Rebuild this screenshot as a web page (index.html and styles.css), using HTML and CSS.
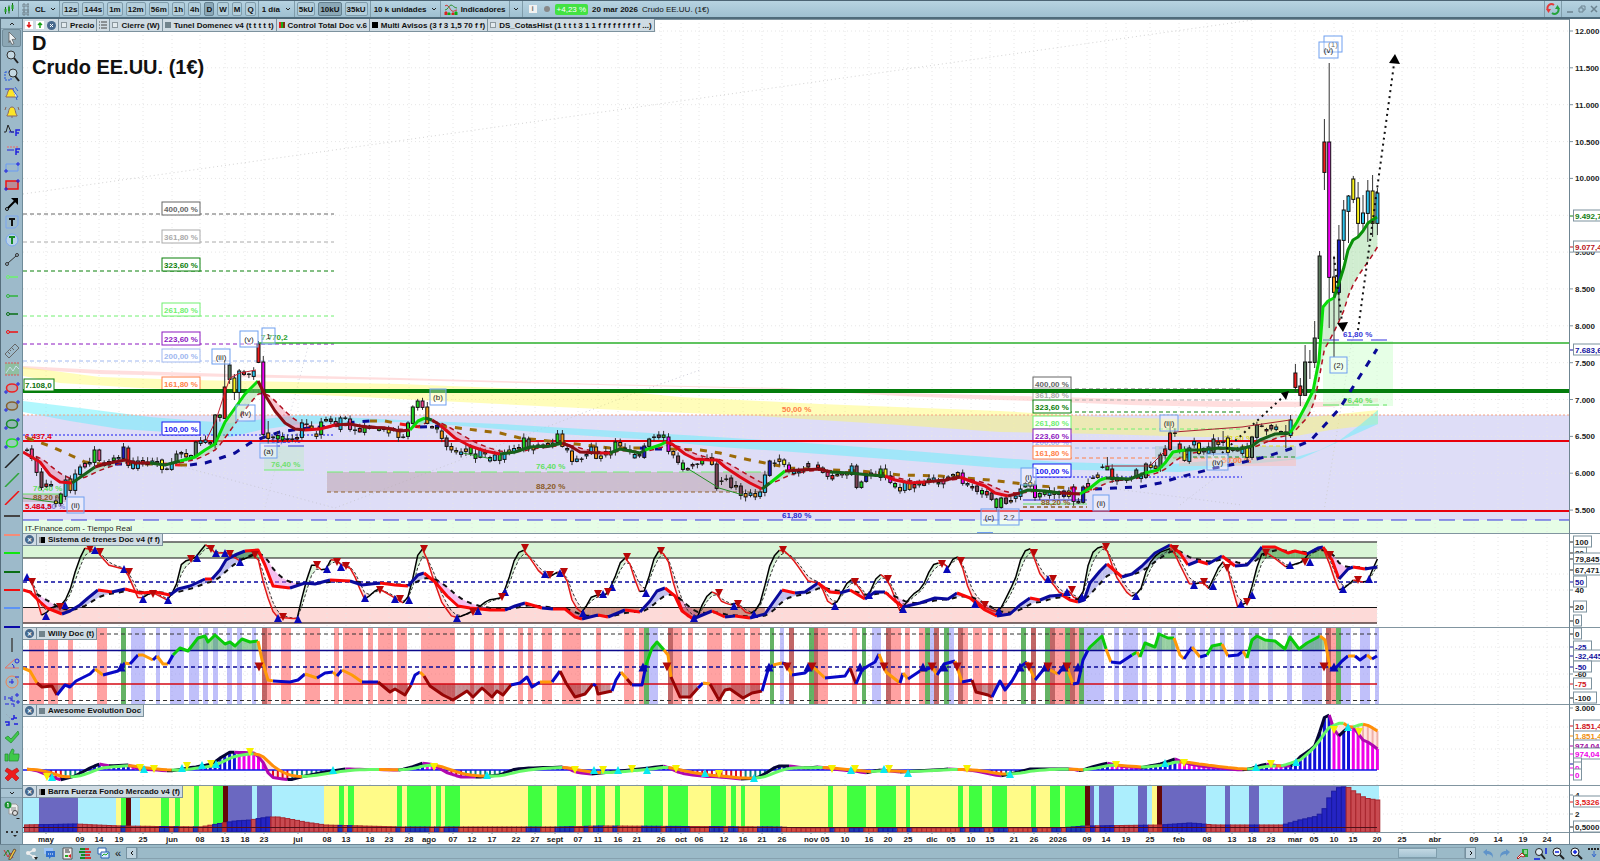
FILE: index.html
```html
<!DOCTYPE html>
<html lang="es">
<head>
    <meta charset="UTF-8">
    <meta name="viewport" content="width=device-width, initial-scale=1.0">
    <title>Crudo EE.UU. (1€)</title>
    <link rel="stylesheet" href="styles.css">
</head>
<body>
    <!-- Top toolbar -->
    <header class="toolbar">
        <div class="group logo">
            <svg width="12" height="12" viewBox="0 0 12 12"><path d="M2.5 4v7M6 2.500v8M9.500 0v8" stroke="#176b17"/><path d="M1.500 6h2v3h-2zM5 4h2v4H5zM8.500 2h2v4h-2z" fill="#22a022"/></svg>
        </div>
        <div class="group symbol">
            <svg width="7" height="13" viewBox="0 0 7 13"><path d="M1 1h2v3H1zM5 1h2v3H5zM1 6h2v2H1zM5 6h2v2H5zM1 9h2v3H1zM5 9h2v3H5z" fill="none" stroke="#70828c"/></svg>
            <label class="drop"><select aria-label="Símbolo"><option>CL</option></select><svg class="chev" viewBox="0 0 6 4"><path d="M1 1l2 2 2-2"/></svg></label>
        </div>
        <div class="group frames">
            <button>12s</button><button>144s</button><button>1m</button><button>12m</button><button>56m</button><button>1h</button><button>4h</button><button class="on">D</button><button>W</button><button>M</button><button>Q</button>
        </div>
        <div class="group">
            <label class="drop"><select aria-label="Periodo"><option>1 día</option></select><svg class="chev" viewBox="0 0 6 4"><path d="M1 1l2 2 2-2"/></svg></label>
        </div>
        <div class="group frames">
            <button>5kU</button><button class="on">10kU</button><button>35kU</button>
        </div>
        <div class="group">
            <label class="drop"><select aria-label="Unidades"><option>10 k unidades</option></select><svg class="chev" viewBox="0 0 6 4"><path d="M1 1l2 2 2-2"/></svg></label>
        </div>
        <div class="group">
            <button class="plain"><svg width="14" height="13" viewBox="0 0 14 13"><path d="M1 3c3-3 5 4 7 5s3-1 5-1" fill="none" stroke="#d03030"/><path d="M1 7c3 0 4-5 6-5s3 3 6 3" fill="none" stroke="#309030"/><path d="M1 12V9h2v3M8 12v-2h2v2" fill="#d22" stroke="#d22"/><path d="M4 12v-2h2v2M11 12V9h2v3" fill="#1a1" stroke="#1a1"/></svg>Indicadores</button>
        </div>
        <div class="group">
            <button class="plain" aria-label="Más indicadores"><svg class="chev" viewBox="0 0 6 4"><path d="M1 1l2 2 2-2"/></svg></button>
        </div>
        <div class="quote">
            <span class="info">i</span><span class="dot"></span><span class="change">+4,23 %</span><b>20 mar 2026</b><span>Crudo EE.UU. (1€)</span>
        </div>
        <div class="window-controls">
            <button class="plain sync" aria-label="Sincronizar"><svg width="14" height="14" viewBox="0 0 14 14"><path d="M2 8a4 4 0 0 1 6-5" fill="none" stroke="#e33b3b" stroke-width="2"/><path d="M0 7h5L2.500 11z" fill="#e33b3b"/><path d="M12 6a4 4 0 0 1-6 5" fill="none" stroke="#23a33a" stroke-width="2"/><path d="M9 7h5l-2.500-4z" fill="#23a33a"/></svg></button>
            <button class="plain" aria-label="Minimizar"><svg width="8" height="8" viewBox="0 0 8 8"><path d="M1 7h6" stroke="#6c8390" stroke-width="1.500"/></svg></button>
            <button class="plain" aria-label="Restaurar"><svg width="8" height="8" viewBox="0 0 8 8"><path d="M1 3h4v4H1zM3 3V1h4v4H5" fill="none" stroke="#6c8390"/></svg></button>
            <button class="plain" aria-label="Cerrar"><svg width="8" height="8" viewBox="0 0 8 8"><path d="M1 1l6 6M7 1L1 7" stroke="#6c8390" stroke-width="1.500"/></svg></button>
        </div>
    </header>

    <div class="workspace">
        <!-- Drawing tools -->
        <nav class="sidebar">
            <button class="scroll" aria-label="Subir"><svg class="chev" viewBox="0 0 6 4"><path d="M1 3l2-2 2 2"/></svg></button>
            <div class="tools" id="tools"></div>
            <button class="scroll more" aria-label="Bajar"><svg class="chev" viewBox="0 0 6 4"><path d="M1 1l2 2 2-2"/></svg></button>
            <button class="tool tall" aria-label="Listas"><svg width="16" height="18" viewBox="0 0 16 18"><path d="M5 3h7l2 2v8H5z" fill="#eee" stroke="#999"/><path d="M7 7h5M7 9h5" stroke="#888"/><circle cx="4" cy="4" r="3.500" fill="#18912c"/><path d="M3 3l1-1v4" stroke="#fff" fill="none"/><circle cx="11" cy="12" r="2.500" fill="#ddd" stroke="#444"/><path d="M12 17h4l-2 2z" fill="#222"/></svg></button>
            <button class="tool tall" aria-label="Más"><svg width="14" height="12" viewBox="0 0 14 12"><path d="M1 4h2v2H1zM6 4h2v2H6zM11 4h2v2h-2z" fill="#333"/><path d="M8 8h4l-2 2z" fill="#222"/></svg></button>
        </nav>

        <main class="charts">
            <section class="panel price" data-panel="price">
                <div class="tags">
                    <div class="tag">
                        <svg width="8" height="8" viewBox="0 0 8 8"><path d="M0 0h8v8H0z" fill="#fff"/><path d="M4 1v5M2 4l2 2 2-2" stroke="#e01818" stroke-width="1.500" fill="none"/></svg>
                        <svg width="8" height="8" viewBox="0 0 8 8"><path d="M0 0h8v8H0z" fill="#fff"/><path d="M4 7V2M2 4l2-2 2 2" stroke="#18a018" stroke-width="1.500" fill="none"/></svg>
                        <svg width="9" height="9" viewBox="0 0 9 9"><circle cx="4.500" cy="4.500" r="4.500" fill="#47698c"/><path d="M3 3l3 3M6 3L3 6" stroke="#fff"/></svg>
                    </div>
                    <div class="tag"><span class="swatch empty"></span>Precio</div>
                    <div class="tag"><svg width="8" height="8" viewBox="0 0 8 8"><path d="M0 1h1M0 4h1M0 7h1M2 1h6M2 4h6M2 7h6" stroke="#444"/></svg></div>
                    <div class="tag"><span class="swatch empty"></span>Cierre (W)</div>
                    <div class="tag"><span class="swatch grey"></span>Tunel Domenec v4 (t t t t t)</div>
                    <div class="tag"><span class="swatch multi"></span>Control Total Doc v.6</div>
                    <div class="tag"><span class="swatch black"></span>Multi Avisos (3 f 3 1,5 70 f f)</div>
                    <div class="tag"><span class="swatch empty"></span>DS_CotasHist (1 t t t 3 1 1 f f f f f f f f f ...)</div>
                </div>
                <h1>D<br>Crudo EE.UU. (1€)</h1>
                <svg class="plot"></svg><svg class="axis"></svg>
            </section>
            <section class="panel trains" data-panel="trains">
                <div class="tags title"><button class="tag close" aria-label="Quitar">✕</button><div class="tag"><span class="swatch half"></span>Sistema de trenes Doc v4 (f f)</div></div>
                <svg class="plot"></svg><svg class="axis"></svg>
            </section>
            <section class="panel willy" data-panel="willy">
                <div class="tags title"><button class="tag close" aria-label="Quitar">✕</button><div class="tag"><span class="swatch grey"></span>Willy Doc (t)</div></div>
                <svg class="plot"></svg><svg class="axis"></svg>
            </section>
            <section class="panel awesome" data-panel="awesome">
                <div class="tags title"><button class="tag close" aria-label="Quitar">✕</button><div class="tag"><span class="swatch grey"></span>Awesome Evolution Doc</div></div>
                <svg class="plot"></svg><svg class="axis"></svg>
            </section>
            <section class="panel force" data-panel="force">
                <div class="tags title"><button class="tag close" aria-label="Quitar">✕</button><div class="tag"><span class="swatch half"></span>Barra Fuerza Fondo Mercado v4 (f)</div></div>
                <svg class="plot"></svg><svg class="axis"></svg>
            </section>
            <section class="panel time" data-panel="time">
                <svg class="plot"></svg><svg class="axis"></svg>
            </section>
        </main>
    </div>

    <!-- Bottom bar -->
    <footer class="bottombar">
        <button class="plain pencil" aria-label="Dibujar"><svg width="14" height="13" viewBox="0 0 14 13"><path d="M1 3l4 7 2-4 3 5" fill="none" stroke="#c33"/><path d="M1 9l4-6 3 7" fill="none" stroke="#282"/><path d="M6 11l5-9 2 1-5 9-2 1z" fill="#f3c33a" stroke="#654"/></svg></button>
        <button class="plain" aria-label="Compartir"><svg width="13" height="13" viewBox="0 0 13 13"><path d="M9 3L3 6l6 4" stroke="#eee" fill="none" stroke-width="1.500"/><circle cx="9" cy="3" r="2" fill="#eee"/><circle cx="3" cy="6" r="2" fill="#eee"/><circle cx="9" cy="10" r="2" fill="#eee"/><path d="M9 10h4l-2 3z" fill="#222"/></svg></button>
        <button class="plain" aria-label="Comentarios"><svg width="13" height="13" viewBox="0 0 13 13"><path d="M1 1h9v6H1z" fill="#9cc3f4"/><path d="M3 4h9v6H8l-2 2v-2H3z" fill="#2f6fd0"/><path d="M5 7h1M7 7h1M9 7h1" stroke="#fff"/></svg></button>
        <button class="plain" aria-label="Informe"><svg width="13" height="13" viewBox="0 0 13 13"><path d="M2 1h9v11H2z" fill="#eee" stroke="#555"/><path d="M4 3h4M4 5h5" stroke="#333"/><path d="M4 8h3v2H4z" fill="#2a2"/><path d="M7 9l3-2v4z" fill="#d22"/></svg></button>
        <button class="plain" aria-label="Órdenes"><svg width="13" height="13" viewBox="0 0 13 13"><path d="M1 2h5M0 5h6M2 8h4M1 11h5" stroke="#168a26" stroke-width="2"/><path d="M6 2h4M6 5h6M6 8h5M6 11h6" stroke="#d63030" stroke-width="2"/></svg></button>
        <button class="plain" aria-label="Ventanas"><svg width="13" height="13" viewBox="0 0 13 13"><path d="M1 1h8v6H1z" fill="#fff" stroke="#2660b0"/><path d="M4 5h8v6H4z" fill="#d8eaff" stroke="#2660b0"/><path d="M5 9l2-2 2 1 2-2" stroke="#2a2" fill="none"/></svg></button>
        <span class="collapse">«</span>
        <button class="arrow" aria-label="Atrás"><svg width="4" height="6" viewBox="0 0 4 6"><path d="M3 1L1 3l2 2" fill="none" stroke="#111"/></svg></button>
        <div class="track"><div class="thumb"></div></div>
        <button class="arrow" aria-label="Adelante"><svg width="4" height="6" viewBox="0 0 4 6"><path d="M1 1l2 2-2 2" fill="none" stroke="#111"/></svg></button>
        <div class="zooms">
            <button class="plain" aria-label="Deshacer"><svg width="12" height="11" viewBox="0 0 12 11"><path d="M1 4l4-3v2c4 0 6 2 6 7-1-3-3-4-6-4v2z" fill="#5f93c9"/></svg></button>
            <button class="plain" aria-label="Rehacer"><svg width="12" height="11" viewBox="0 0 12 11"><path d="M11 4L7 1v2c-4 0-6 2-6 7 1-3 3-4 6-4v2z" fill="#5f93c9"/></svg></button>
            <button class="plain" aria-label="Configurar"><svg width="13" height="13" viewBox="0 0 13 13"><path d="M6 2h6v8H6z" fill="#24a534"/><path d="M8 4h3M8 6h3" stroke="#fff"/><path d="M1 11l5-5 3 3-2 1-2-1-3 3z" fill="#eee" stroke="#b22"/></svg></button>
            <button class="plain" aria-label="Ajustar"><svg width="13" height="13" viewBox="0 0 13 13"><circle cx="5" cy="5" r="3.500" fill="#ddeaf2" stroke="#222"/><path d="M7 7l4 5" stroke="#222" stroke-width="2"/><path d="M12 1v6M0 12h6" stroke="#12d" stroke-width="1.500"/></svg></button>
            <button class="plain" aria-label="Alejar"><svg width="13" height="13" viewBox="0 0 13 13"><circle cx="5" cy="5" r="4" fill="#eef5fb" stroke="#222"/><path d="M8 8l4 4" stroke="#222" stroke-width="2"/><path d="M3 5h4" stroke="#12d" stroke-width="1.500"/></svg></button>
            <button class="plain" aria-label="Acercar"><svg width="13" height="13" viewBox="0 0 13 13"><circle cx="5" cy="5" r="4" fill="#eef5fb" stroke="#222"/><path d="M8 8l4 4" stroke="#222" stroke-width="2"/><path d="M3 5h4M5 3v4" stroke="#12d" stroke-width="1.500"/></svg></button>
            <button class="plain" aria-label="Bajar barra"><svg width="12" height="12" viewBox="0 0 12 12"><path d="M0 2h12" stroke="#222" stroke-width="2" stroke-dasharray="2 1"/><path d="M6 4v5M4 7l2 3 2-3" stroke="#36c" fill="none"/></svg></button>
        </div>
    </footer>

    <script src="charts.js"></script>
</body>
</html>
```
FILE: styles.css
```css
* {
    box-sizing: border-box;
}
body {
    margin: 0;
    height: 100vh;
    display: flex;
    flex-direction: column;
    overflow: hidden;
    background: #fff;
    color: #111;
    font-family: "Liberation Sans", Arial, sans-serif;
    font-size: 8px;
}
button, select {
    font: inherit;
    font-weight: bold;
    color: inherit;
    margin: 0;
}
svg {
    display: block;
    flex: none;
}

/* Toolbar */
.toolbar {
    flex: none;
    display: flex;
    align-items: stretch;
    height: 19px;
    border-top: 1px solid #4c6474;
    border-bottom: 2px solid #4f6b7b;
    background: linear-gradient(#b7d3e1, #9fc0d1);
    font-weight: bold;
}
.group {
    display: flex;
    align-items: center;
    gap: 3px;
    padding: 0 3px;
    border-right: 1px solid #7f9caa;
}
.logo {
    width: 19px;
}
.symbol {
    gap: 6px;
}
.frames {
    padding: 0 2px;
}
.frames button {
    height: 14px;
    padding: 0 1px;
    border: 1px solid #7f9cab;
    border-radius: 2px;
    background: #b3cedb;
}
.frames button.on {
    background: #8ba8b7;
    border-color: #64808f;
}
.drop {
    display: flex;
    align-items: center;
    gap: 4px;
}
.drop select {
    appearance: none;
    border: 0;
    padding: 0;
    background: none;
}
.chev {
    width: 6px;
    height: 4px;
    fill: none;
    stroke: #222;
}
.plain {
    display: flex;
    align-items: center;
    justify-content: center;
    gap: 3px;
    border: 0;
    padding: 0;
    background: none;
}
.quote {
    display: flex;
    align-items: center;
    gap: 4px;
    padding-left: 6px;
    font-weight: normal;
}
.info {
    width: 8px;
    height: 8px;
    background: #f2f2f2;
    color: #777;
    font-weight: bold;
    line-height: 8px;
    text-align: center;
}
.dot {
    width: 6px;
    height: 6px;
    margin: 0 1px 0 3px;
    border-radius: 3px;
    background: #888;
}
.change {
    padding: 1px 2px;
    border-radius: 2px;
    background: #43e243;
    color: #fff;
}
.window-controls {
    display: flex;
    gap: 4px;
    margin-left: auto;
    padding-right: 2px;
}
.sync {
    padding: 0 1px;
    border: solid #7f9caa;
    border-width: 0 1px;
}

/* Sidebar */
.workspace {
    flex: 1;
    min-height: 0;
    display: flex;
}
.sidebar {
    flex: none;
    width: 23px;
    display: flex;
    flex-direction: column;
    border-left: 1px solid #566e7c;
    border-right: 1px solid #6f8b99;
    background: #9dbaca;
}
.scroll {
    display: flex;
    align-items: center;
    justify-content: center;
    height: 10px;
    border: 0;
    border-bottom: 1px solid #84a0ae;
    padding: 0;
    background: #a9c5d3;
}
.more {
    margin-top: 5px;
    border-top: 1px solid #6f8b99;
}
.tools {
    flex: 1;
    min-height: 0;
    display: grid;
    grid-auto-rows: 1fr;
}
.tool {
    display: flex;
    align-items: center;
    justify-content: center;
    min-height: 0;
    margin: 0 1px;
    border: 1px solid transparent;
    border-radius: 2px;
    padding: 0;
    background: none;
}
.tool.selected {
    background: #8ba6b4;
    border-color: #718c9a;
}
.tool.tall {
    height: 23px;
}

/* Chart panels */
.charts {
    flex: 1;
    min-width: 0;
    display: flex;
    flex-direction: column;
}
.panel {
    position: relative;
    display: flex;
    min-height: 0;
}
.price {
    flex: 514 1 0;
}
.trains {
    flex: 94 1 0;
}
.willy {
    flex: 77 1 0;
}
.awesome {
    flex: 81 1 0;
}
.force {
    flex: 47 1 0;
}
.time {
    flex: 12 1 0;
}
.plot {
    flex: 1;
    min-width: 0;
    height: 100%;
}
.axis {
    width: 31px;
    height: 100%;
    border-left: 1px solid #6f8592;
}
.panel text {
    font-size: 8px;
    font-weight: bold;
}
.panel text.wave {
    font-weight: normal;
}
.panel h1 {
    position: absolute;
    top: 12px;
    left: 9px;
    margin: 0;
    font-size: 20px;
    line-height: 24px;
}
.tags {
    position: absolute;
    top: 0;
    left: 0;
    display: flex;
    height: 13px;
    border: 1px solid #7d929e;
    border-top: 0;
    border-left: 0;
    background: #cfdbe3;
    font-weight: bold;
}
.tags.title {
    top: 1px;
    height: 12px;
}
.tag {
    display: flex;
    align-items: center;
    gap: 3px;
    padding: 0 2px;
    white-space: nowrap;
}
.tag + .tag {
    border-left: 1px solid #7d929e;
}
.tag.close {
    width: 13px;
    height: 11px;
    border: 0;
    padding: 0;
    justify-content: center;
    background: radial-gradient(circle, #47698c 4px, transparent 5px);
    color: #fff;
    font-size: 6px;
}
.swatch {
    width: 6px;
    height: 6px;
}
.empty {
    background: #e3eaee;
    border: 1px solid #8d999f;
}
.grey {
    background: #71838c;
}
.black {
    background: #000;
}
.multi {
    background: linear-gradient(90deg, #e02020 33%, #18b018 33% 66%, #803010 66%);
}
.half {
    background: linear-gradient(90deg, #888 40%, #000 40%);
}

/* Bottom bar */
.bottombar {
    flex: none;
    display: flex;
    align-items: center;
    gap: 5px;
    height: 17px;
    border-top: 1px solid #6d8796;
    background: #9bbac8;
}
.pencil {
    width: 20px;
    align-self: stretch;
    background: #8da9b7;
}
.bottombar .plain {
    flex: none;
}
.collapse {
    font-size: 11px;
}
.arrow {
    display: flex;
    align-items: center;
    justify-content: center;
    width: 11px;
    height: 12px;
    border: 1px solid #7591a0;
    padding: 0;
    background: #bcd2de;
}
.track {
    flex: 1;
    display: flex;
    align-self: stretch;
    margin: 2px -5px;
    border: 1px solid #86a1af;
}
.thumb {
    width: 3%;
    margin-left: 95%;
    border: 1px solid #7f9ead;
    background: linear-gradient(#c2d8e3, #a5c3d2);
}
.zooms {
    display: flex;
    gap: 5px;
    padding-left: 1px;
}
```
FILE: charts.js
```js
// Coordinates below are on a 1546 x 825 sheet that starts at (23, 19); every panel scales its own slice.
const X0 = 23, XW = 1546, FIRST = 27, STEP = 4.823, BARS = 281;

const PANELS = {
    price: [19, 514],
    trains: [533, 94],
    willy: [627, 77],
    awesome: [704, 81],
    force: [785, 47],
    time: [832, 12]
};

const CANDLE = { g: '#1fd61f', c: '#2cc4ee', o: '#f39a18', m: '#f400f4', p: '#ef3f8b', r: '#f01c1c', s: '#5b7a5e', b: '#1c1cc0', y: '#fbf21a', w: '#7c4455' };

const TIMES = 'may,46 09,80 14,99 19,119 25,143 jun,172 08,200 13,225 18,245 23,264 jul,298 08,327 13,346 18,370 23,389 28,409 ago,429 07,453 12,472 17,492 22,516 27,535 sept,555 07,578 11,598 16,618 21,637 26,661 oct,681 06,699 12,724 16,743 21,762 26,782 nov,811 05,825 10,845 16,869 20,888 25,908 dic,932 05,951 10,971 15,990 21,1014 26,1034 2026,1058 09,1087 14,1106 19,1126 25,1150 feb,1179 08,1207 13,1232 18,1252 23,1271 mar,1295 05,1314 10,1334 15,1353 20,1377 25,1402 abr,1435 09,1474 14,1498 19,1523 24,1547'
    .split(' ').map(t => { const p = t.split(','); return [p[0], +p[1]]; });

// start x, then one entry per session: middle, or top-bottom + colour, optionally /high-low
const SESSIONS = [
    [27, '450 449-458p 459-472p 472-487w 485 485 502 494-503g 480-496c 479-490o 474-490c 467-474c 465 463 450-462g 450-460p 464 463 459 458 447-458b/443-460 448-465r 461-468c 461-468c 462 463 462 462 460-469y 469 463-469c 454-462s 453 455 457'],
    [196, '442-456s 442 441 443 415-444s 416 387-418r/360-418 365-379s 378-392y/374-400 371-392c/369-405 373 374 371-376c 344-362r 362-434m/356-439 433-438o/421-444 437 437 438 439 439 438 423-437c 424 427 435 422-434g 420 420 423 418-429c 418 419-429p 430 430 427-432g 427 428 429 429 431 429'],
    [400, '430-437o 437 423-436g 407-423g 401-407g 401-407p 407-423o 427 428 431-438o 438-446w 448 451 453 450 447-453g 454-458g 450-457c 453 459 455-460c 454-460g 453-459c 451 450 448 438-448g 439-448s 448 445 446 445 444 434-442g/430-444 434-446o 449 451-461o 460 459 455 447-453c 447-458o 457 453 453 442-451g 444 448 450 456 455 446-457b 439-446s 437 436 436 437-451m 453 456-462w 463-469g 469'],
    [694, '465 464 462 459 458-464o 464-488w 481 479 478-487w 486 486-495w 495 494 495 492-496c 475-492c 461-475b 463 460 460-464y 465-471m 472 472 470 465'],
    [816, '466 468-472p 472-476p 477 475 474 474 466-474c/463-476 466-487w 482-487g 476-481b 474 475 469-477g 469-477y 476-482m 485 489 482-490c 482-489o 486 484 484 480 479 483 482 478 475 474 473-483m 484 487 486-491w 492 493 493-499w'],
    [995, '499-507g 498-507g 498-503w 501 497 489-496c 485 484 485-497m 495 493 491-495c 493 493 491-496b 491-496y 487-501m 502 487-502b 485 478 476 467 468/457-470 469-479r 479 479 480 478 470-477s 477 464-477s 466 467 455-467s 449-455r 433-449r/426-451 433 444-450r 451-460y 448-461c 443 443-453y 450'],
    [1208, '447-453c 439-452s 443 442/431-446 438-452y 450 450 447-453c 447-457y 437-457s 425-437s 426 430 427 428 432 433/425-448 420-435c/415-438'],
    [1295, '373-387r/364-392 386-395r/378-406 362-395s/345-395 362-362s/350-379 338-362s/321-368 256-338s/251-343 142-172r/119-190 142-277m/63-328 277-292o/256-357 240-292b/225-320 210-240c/200-260 196-211c/195-243 179-199y/176-203 198-223y/182-237 213-223c/195-232 191-213c/180-242 191-223y/175-237 193-223c/188-235']
];

const FAST = '23,452r 40,462 50,475 60,482 72,483k 85,474 95,467d 105,464 125,460 135,463 150,463k 165,465 180,461g 195,457 205,450 215,444 225,422 235,408 245,394 258,381d 265,395 275,411 285,423 295,429 305,430r 320,429 335,425d 350,424 365,427 385,428 400,431 410,430g 418,421 425,418k 432,420d 440,425r 455,438 470,446 485,451 500,454k 515,452 530,447 550,446 562,443d 570,446 580,452 600,453r 610,453k 620,449 640,453 645,450g 660,445 666,442r 672,444 685,454 695,459 710,460 717,460 725,467 740,477 750,483 762,489k 770,483g 785,471d 800,470 820,469 830,472k 850,473 870,475 885,476r 895,480 910,483 925,482d 945,480 960,477r 970,481 985,486 995,493 1008,496d 1020,493k 1028,490 1045,491 1060,493d 1080,494g 1090,488 1100,480 1106,478k 1130,479 1145,473g 1158,470 1165,463 1173,452 1185,450k 1200,450 1220,448 1240,449 1252,446 1260,440 1275,434 1290,433g 1297,422 1305,407 1313,391 1319,360 1323,307 1328,301 1334,298h 1338,286 1344,267 1348,250 1353,240h 1358,237 1363,231 1368,223 1377,217';
const SLOW = '1290,436 1305,420 1313,408 1318,385 1324,350 1328,343 1335,330 1345,308 1350,290 1360,273 1372,256 1377,247';
const BASE = '27,438y 50,446 70,455 85,462 100,464r 115,464b 130,464y 160,464r 180,465y 190,465b 205,463 215,460 235,453 250,443 262,438 280,432 300,429 330,426 345,423 370,421y 385,421 400,424r 420,427b 440,426y 450,427 475,430 500,433 520,438 540,440 585,445 610,448 640,448b 650,449 670,449y 700,450 720,453 740,458 760,462 790,468 810,469 860,471 900,475 940,476 990,480 1040,486 1070,488r 1095,489b 1115,488 1140,487 1160,483 1180,477 1215,468 1240,463 1265,457 1290,449 1310,441 1323,427 1340,408 1353,387 1367,365 1377,349';
const CLOUDS = [
    ['rgba(255,190,190,.5)', '23,366 100,370 230,374 400,378 600,384 780,388 860,392 1020,396 1200,401 1330,402 1378,398', '23,369 100,374 230,377 400,380 600,385 780,389 900,396 1000,400 1060,402 1130,405 1220,407 1330,407 1378,402'],
    ['rgba(255,250,90,.42)', '23,367 100,377 190,380 400,384 500,388 640,393 680,397 820,404 1000,411 1100,417 1220,420 1290,419 1340,414 1378,410', '23,376 60,383 140,388 300,394 400,399 500,404 640,411 760,416 820,420 900,425 1000,432 1100,434 1200,437 1290,437 1330,430 1378,424'],
    ['rgba(100,240,252,.5)', '23,401 80,408 150,417 200,421 230,423 300,415 400,420 500,424 600,430 700,436 780,441 900,450 1000,458 1060,462 1160,465 1220,460 1290,459 1320,450 1340,440 1360,425 1378,410', '23,412 70,421 120,429 200,434 230,437 260,430 300,424 400,422 450,425 560,434 640,439 720,447 780,451 900,460 1000,468 1080,470 1180,472 1220,467 1300,459 1325,448 1340,441 1378,424']
];

const TRAIN = '23,590r 30,592 38,600 47,608 62,614n 70,611 80,605 88,598 98,590r 112,592n 125,589r 140,593 155,592 170,595n 178,589 190,586 205,579r 212,579n 220,570 226,560 235,555 245,551r 258,550 265,565 273,586 290,588n 305,583 315,584 330,580r 350,581n 362,585 380,583r 395,585 408,586n 418,575 424,573r 435,582 447,596 458,606 470,608 490,610 505,610n 515,606 525,603r 542,608n 553,609r 565,609 575,617 582,619n 590,617 598,615r 608,617n 625,610r 640,612n 650,601 657,591 665,588r 675,596 682,611 693,619n 700,616 712,611r 725,617n 735,616r 750,618n 765,614 772,604 782,590r 795,593n 805,592 818,583r 830,592 840,593n 850,590r 865,599n 875,592 885,592r 895,601 903,607n 920,603 935,598 948,599 957,593r 970,598 985,610 997,616n 1010,614 1020,605 1030,598r 1040,600n 1050,596 1062,595r 1070,600 1078,602n 1084,600 1090,583 1100,571 1107,564r 1115,571 1122,577n 1132,574 1142,566 1155,553 1170,545r 1180,553 1188,565n 1198,561r 1208,564n 1222,556r 1235,566n 1247,565 1255,556 1262,547r 1275,547 1288,553 1295,551 1307,554n 1318,548 1323,547r 1332,560 1339,579n 1348,569 1353,567r 1365,569n 1377,567';
const WAGON = '23,577 32,582 42,617 52,607 63,605 70,590 78,562 85,548 97,551 108,565 124,569 128,575 139,600 152,592 167,600 175,590 182,562 195,558 206,544 215,553 228,553 240,561 253,555 258,558 265,590 275,617 297,619 305,585 313,561 320,570 327,569 332,557 340,564 352,569 358,585 365,600 378,588 395,598 405,604 410,592 419,549 424,549 432,575 442,603 453,618 462,616 475,610 488,600 500,598 506,588 515,558 522,548 530,558 540,573 548,578 557,572 565,573 572,600 580,614 584,610 592,596 607,594 614,580 622,558 628,558 635,580 642,598 648,580 656,552 661,550 668,560 675,590 685,616 697,618 705,598 714,590 722,602 731,605 737,603 745,612 753,614 762,600 768,570 777,550 785,551 795,562 808,581 820,583 828,602 835,606 842,592 850,578 858,586 867,600 875,580 880,574 888,580 900,611 912,595 922,588 932,565 942,562 948,568 956,554 961,562 970,595 980,604 990,610 999,612 1010,590 1015,580 1022,555 1029,546 1037,565 1042,580 1050,580 1062,596 1070,590 1075,600 1082,598 1090,555 1101,545 1108,552 1115,575 1130,597 1140,592 1148,565 1158,553 1172,548 1180,565 1190,585 1203,582 1208,590 1222,560 1228,570 1237,607 1248,602 1255,575 1260,555 1266,552 1277,560 1286,567 1302,562 1312,550 1323,548 1330,565 1338,590 1345,588 1353,580 1367,583 1377,559';
const TRAIN_UP = '27,577 46,616 65,605 95,550 124,569 143,599 168,600 197,558 216,553 225,553 240,562 278,618 298,619 327,569 341,567 365,598 395,599 409,600 457,618 478,611 505,592 545,574 560,573 583,613 603,594 612,587 646,593 694,618 734,606 754,614 835,606 869,595 903,609 947,569 975,604 999,611 1048,579 1067,592 1082,597 1136,596 1194,585 1213,586 1241,604 1252,595 1290,565 1310,562 1343,589 1369,579';
const TRAIN_DOWN = '32,582 60,607 90,549 100,552 129,572 153,594 191,559 211,549 230,554 255,555 283,617 317,565 337,562 346,566 380,590 400,599 424,549 473,612 502,597 525,548 550,575 564,572 598,594 608,592 627,557 661,551 719,593 738,604 783,550 855,582 888,579 942,564 961,561 985,605 1034,553 1053,579 1072,590 1106,547 1175,549 1204,582 1227,568 1247,602 1266,553 1305,562 1330,555 1358,580';

const WILLY = '23,668o 30,671 37,683d 42,687 52,686 57,695n 65,685 70,687 76,681 90,674 95,669o 103,675n 118,671 125,663o 130,664n 138,655o 143,655 153,660n 157,656o 163,664 168,664n 173,655g 180,648 188,651 198,638 205,636 208,642 215,635 225,644 230,642 235,646 242,639 250,642 258,641o 262,660 268,680 273,681n 290,682 298,680 305,674o 317,678n 325,673 333,672o 337,676n 342,670o 352,675 362,682n 370,682 378,682d 390,692 395,689 405,695 411,685n 415,675 420,672o 424,676d 430,686 443,695 453,700 467,691 473,697 482,688 492,697 497,691 503,695 511,685n 520,683 527,677 532,687 540,682o 552,682n 560,671d 566,683 575,697 585,694 593,684n 596,686d 598,694 612,691n 616,680 621,672o 627,679d 632,685n 642,685 646,665g 652,648 657,642 664,650o 668,655 671,677d 680,697 690,697 698,688n 703,683o 710,684d 719,700 725,690 730,689 743,698 752,693 762,691n 768,670 773,665o 782,663n 786,664o 792,675n 805,673 812,666o 825,678n 845,676 850,668d 856,684n 862,670 868,666 875,662 879,654o 886,672 900,683n 903,673o 908,679n 920,671o 925,670n 932,667o 937,675n 944,664 955,661o 962,682n 972,680d 976,692 988,695 992,697n 1000,681 1005,690 1012,681 1020,667 1027,662o 1035,680n 1044,669 1050,670o 1058,674n 1065,665o 1068,670 1073,684n 1078,683 1083,660 1088,650g 1090,647 1102,636 1106,649o 1111,662n 1120,663 1132,655g 1137,652o 1140,657g 1145,643 1155,647 1159,634 1168,638 1174,638o 1180,655 1184,659n 1192,647o 1200,657n 1207,655g 1212,646 1222,644o 1228,656n 1238,655 1243,651o 1247,658g 1252,640 1257,636 1265,640 1275,641 1285,649 1290,637 1299,649 1307,643 1320,636o 1325,640 1330,668n 1335,669 1342,661 1348,656o 1355,656n 1360,660 1367,655o 1372,659n 1377,656';
const WILLY_BANDS = {
    'rgba(255,70,70,.5)': '29-44 48-58 68-73 97-107 267-271 281-291 305-320 334-339 343-363 368-373 378-393 397-407 421-455 470-474 484-494 499-504 518-523 528-533 542-552 562-581 596-601 624-634 639-644 673-682 688-693 707-722 731-745 750-760 818-828 852-857 891-901 905-910 919-925 963-968 973-982 988-993 1002-1007 1055-1065 1075-1079 1331-1336',
    'rgba(40,150,40,.72)': '121-126 644-649 770-774 809-814 862-866 925-930 944-949 1021-1026 1045-1050 1065-1070 1079-1084 1336-1341',
    'rgba(130,130,245,.5)': '131-145 156-160 170-184 189-199 203-208 213-218 227-232 237-242 252-256 649-658 780-784 872-881 930-934 949-954 1084-1104 1114-1119 1123-1138 1142-1147 1157-1162 1171-1176 1186-1195 1200-1205 1210-1215 1220-1225 1234-1244 1249-1259 1268-1273 1287-1292 1302-1322 1341-1351 1360-1370 1375-1379',
    'rgba(160,20,20,.65)': '262-267 668-673 789-794 814-818 886-891 934-939 958-963 1031-1036 1050-1055 1070-1075 1326-1331'
};

const AWESOME = '23,769 35,770 50,776 60,780 75,776 88,769 99,764 110,766 128,765 140,769 170,771 195,767 212,764 220,758 230,752 255,753 263,762 270,777 290,780 305,776 320,773 345,769 400,770 412,767 423,763 435,765 445,772 460,777 480,777 500,775 515,769 530,768 565,767 575,772 590,774 640,769 665,766 680,773 700,776 720,777 740,779 757,778 768,772 777,766 790,766 805,768 820,767 840,770 855,771 865,773 880,770 900,772 950,769 970,770 985,773 1000,776 1010,774 1030,769 1072,769 1080,771 1092,767 1107,763 1120,766 1140,768 1160,764 1175,759 1185,763 1200,766 1240,770 1250,769 1265,764 1280,766 1292,766 1300,757 1310,750 1316,745 1323,720 1328,711 1333,728 1339,736 1348,727 1353,727 1363,740 1370,743 1377,749';
const AWESOME_SLOW = '1285,765 1300,760 1312,750 1320,740 1328,728 1335,725 1342,722 1350,728 1362,724 1370,726 1377,731';

const FORCE_BANDS = {
    '#fffb88': '116-1085 1152-1157',
    '#aceefd': '23-39 78-116 131-140 252-257 272-324 1094-1099 1114-1138 1147-1152 1206-1225 1230-1249 1259-1283 1346-1379',
    '#6b68c1': '39-78 228-252 257-272 1090-1094 1099-1114 1138-1147 1162-1206 1225-1230 1249-1259 1283-1346',
    '#40ff40': '121-126 161-169 175-180 194-199 213-223 339-344 348-354 397-402 407-431 436-441 445-460 528-542 557-576 582-591 596-605 615-620 644-663 668-688 711-726 731-736 741-745 760-780 828-833 847-866 876-896 906-910 958-963 969-982 992-1007 1031-1036 1050-1060 1065-1085',
    '#640808': '126-131 223-228 1085-1090 1157-1162'
};
const FORCE = '23,825 75,824 120,826 200,827 223,823 235,821 250,820 262,818 268,817 278,817 290,819 305,822 325,825 400,827 560,827 600,826 780,827 800,828 1060,828 1085,826 1160,825 1190,823 1215,825 1283,825 1300,820 1318,816 1325,808 1330,796 1335,790 1340,787 1348,787 1355,792 1365,798 1377,800';

function nums(s) {
    return s.split(' ').map(t => t.split(/[,-]/).map(Number));
}

function parse(s) {
    let c = '';
    return s.split(' ').map(t => {
        const m = t.match(/(\d+),(\d+)([a-z]?)/);
        c = m[3] || c;
        return { x: +m[1], y: +m[2], c: c };
    });
}

// one y value per session
function sample(s) {
    const p = parse(s), out = [];
    for (let i = 0; i < BARS; i++) {
        const x = FIRST + i * STEP;
        let k = 0;
        while (k < p.length - 2 && p[k + 1].x < x) k++;
        const t = Math.max(0, Math.min(1, (x - p[k].x) / (p[k + 1].x - p[k].x)));
        out.push(p[k].y + (p[k + 1].y - p[k].y) * t);
    }
    return out;
}

function smooth(a, k) {
    let v = a[0];
    return a.map(y => (v += (y - v) * k));
}

function withTail(a, tail) {
    const from = parse(tail)[0].x, t = sample(tail);
    return a.map((y, i) => FIRST + i * STEP >= from ? t[i] : y);
}

function Pen(name) {
    const section = document.querySelector('[data-panel=' + name + ']');
    const plot = section.querySelector('.plot'), axis = section.querySelector('.axis');
    const top = PANELS[name][0], h = PANELS[name][1];
    const kx = plot.clientWidth / XW, ky = plot.clientHeight / h;
    const X = x => ((x - X0) * kx).toFixed(1), Y = y => ((y - top) * ky).toFixed(1);
    let out = '', side = '';
    const me = {
        line(x1, y1, x2, y2, c, w, dash) {
            out += `<line x1="${X(x1)}" y1="${Y(y1)}" x2="${X(x2)}" y2="${Y(y2)}" stroke="${c}" stroke-width="${w || 1}" ${dash ? `stroke-dasharray="${dash}"` : ''}/>`;
        },
        rect(x1, y1, x2, y2, fill, stroke) {
            out += `<rect x="${X(x1)}" y="${Y(y1)}" width="${(x2 - x1) * kx}" height="${Math.max(0, (y2 - y1) * ky)}" fill="${fill}" ${stroke ? `stroke="${stroke}"` : ''}/>`;
        },
        text(x, y, s, c, anchor, cls) {
            out += `<text x="${X(x)}" y="${Y(y)}" fill="${c}" text-anchor="${anchor || 'start'}" class="${cls || ''}">${s}</text>`;
        },
        poly(points, c, w, dash) {
            out += `<polyline points="${points.map(p => X(p[0]) + ',' + Y(p[1])).join(' ')}" fill="none" stroke="${c}" stroke-width="${w}" stroke-linejoin="round" ${dash ? `stroke-dasharray="${dash}"` : ''}/>`;
        },
        area(points, c) {
            out += `<polygon points="${points.map(p => X(p[0]) + ',' + Y(p[1])).join(' ')}" fill="${c}"/>`;
        },
        // polyline whose colour changes along the way
        coloured(s, map, w, dash) {
            const p = parse(s);
            let run = [[p[0].x, p[0].y]];
            for (let i = 1; i < p.length; i++) {
                run.push([p[i].x, p[i].y]);
                if (i === p.length - 1 || p[i].c !== p[i - 1].c) {
                    me.poly(run, map[p[i - 1].c], w, dash);
                    run = [[p[i].x, p[i].y]];
                }
            }
        },
        series(a, c, w, dash) {
            me.poly(a.map((y, i) => [FIRST + i * STEP, y]), c, w, dash);
        },
        slope(a, up, down, w) {
            let run = [[FIRST, a[0]]], dir = a[1] <= a[0];
            for (let i = 1; i < BARS; i++) {
                const d = Math.abs(a[i] - a[i - 1]) < 0.02 ? dir : a[i] < a[i - 1];
                if (d !== dir) {
                    me.poly(run, dir ? up : down, w);
                    run = [run[run.length - 1]];
                    dir = d;
                }
                run.push([FIRST + i * STEP, a[i]]);
            }
            me.poly(run, dir ? up : down, w);
        },
        between(a, b, above, below) {
            for (let i = 1; i < BARS; i++) {
                const x = FIRST + i * STEP;
                const c = a[i] < b[i] ? above : below;
                if (c) me.area([[x - STEP, a[i - 1]], [x, a[i]], [x, b[i]], [x - STEP, b[i - 1]]], c);
            }
        },
        arrow(x, y, up, c, r) {
            const d = up ? -r : r;
            me.area([[x - r, y - d], [x + r, y - d], [x, y + d]], c);
        },
        bands(groups, y1, y2) {
            for (const c in groups) nums(groups[c]).forEach(b => me.rect(b[0], y1, b[1], y2, c));
        },
        grid(rows, to) {
            TIMES.forEach(t => me.line(t[1], top, t[1], top + h, '#e6e6e6', 1, '1 3'));
            rows.forEach(y => me.line(X0, y, to || X0 + XW, y, '#e6e6e6', 1, '1 3'));
        },
        tick(y, s, c, boxed) {
            if (boxed) side += `<rect x="3.500" y="${Y(y - 6)}" width="${s.length > 5 ? 40 : s.length * 5 + 3}" height="11" fill="#fff" stroke="#7d929e"/>`;
            side += `<line x1="0" x2="3" y1="${Y(y)}" y2="${Y(y)}" stroke="${boxed ? c : '#7d929e'}"/><text x="5" y="${Y(y + 3)}" fill="${c}">${s}</text>`;
        },
        done() {
            me.line(X0, top + 0.5, X0 + XW, top + 0.5, '#8195a0');
            if (name !== 'price') side += '<line x1="0" x2="31" y1="0.5" y2="0.5" stroke="#8195a0"/>';
            plot.innerHTML = out;
            axis.innerHTML = side;
        }
    };
    return me;
}

function drawCandles(p) {
    const small = 'gocpywrcog';
    let seed = 7;
    const rnd = () => (seed = (seed * 16807) % 2147483647) / 2147483647;
    SESSIONS.forEach(([start, list]) => {
        const first = Math.round((start - FIRST) / STEP);
        list.split(' ').forEach((t, i) => {
            const x = FIRST + (first + i) * STEP;
            const [body, wick] = t.split('/');
            const m = body.match(/(\d+)(?:-(\d+)([a-z]))?/);
            let a = +m[1], b = +(m[2] || 0), c = m[3];
            if (!b) {
                const r = Math.floor(rnd() * 4);
                b = a + r / 2;
                a -= r / 2;
                c = small[Math.floor(rnd() * small.length)];
            }
            const w = wick ? wick.split('-').map(Number) : [a - 1 - rnd() * 4, b + 1 + rnd() * 4];
            p.line(x, w[0], x, w[1], '#333', 1);
            p.rect(x - 1.5, a, x + 1.5, b + 0.4, CANDLE[c], '#111');
        });
    });
}

function wave(p, x1, y1, x2, y2, s) {
    p.rect(x1, y1, x2, y2, 'rgba(255,255,255,.35)', '#6f9ff0');
    p.text((x1 + x2) / 2, (y1 + y2) / 2 + 3, s, '#222', 'middle', 'wave');
}

function fib(p, x, to, y, s, c, boxTop, dash) {
    p.line(boxTop && x > 500 ? x : X0, y, to, y, c, 1, dash || '4 3');
    if (!boxTop) return;
    p.rect(x, boxTop, x + 38, boxTop + 13, '#fff', c);
    p.text(x + 19, boxTop + 10, s, c, 'middle');
}

function drawPrice() {
    const p = Pen('price');
    const rows = [];
    for (let i = 0; i < 14; i++) rows.push(31 + i * 36.85);
    p.rect(X0, 415, X0 + XW, 520, '#deddf7');
    p.rect(X0, 520, X0 + XW, 533, '#e6fde6');
    p.grid(rows);
    p.line(23, 194, 1260, 19, '#d4d4d4', 1, '1 3');
    p.poly([[150, 458], [335, 508], [630, 395], [700, 370]], '#c9c9d6', 1, '1 3');
    p.poly([[1108, 488], [1242, 505]], '#c9c9d6', 1, '1 3');
    p.poly([[1180, 505], [1290, 420]], '#c9c9d6', 1, '1 3');
    p.line(1324, 511, 1352, 340, '#d0d0d0', 1, '1 3');
    p.line(264, 511, 308, 347, '#d4d4e0', 1, '1 3');

    CLOUDS.forEach(([c, a, b]) => p.area(nums(a).concat(nums(b).reverse()), c));
    p.rect(1323, 341, 1393, 406, 'rgba(210,255,210,.55)');
    p.rect(264, 446, 304, 470, 'rgba(190,235,200,.45)');
    p.rect(327, 472, 768, 492, 'rgba(185,160,170,.5)');
    p.rect(23, 494, 66, 502, 'rgba(185,160,170,.5)');
    p.rect(1155, 446, 1296, 458, 'rgba(160,200,190,.45)');
    p.rect(1179, 458, 1296, 466, 'rgba(250,190,180,.5)');

    // fibonacci levels
    [[214, '400,00 %', '#666', 202], [242, '361,80 %', '#aaa', 230], [271, '323,60 %', '#0a800a', 258], [316, '261,80 %', '#70f070', 303], [344, '223,60 %', '#8c18c0', 332], [361, '200,00 %', '#a0b8f0', 349]]
        .forEach(f => fib(p, 162, 334, f[0], f[1], f[2], f[3]));
    fib(p, 162, 200, 390, '161,80 %', '#ff8048', 377);
    fib(p, 162, 334, 435, '100,00 %', '#1818f0', 422, '2 2');
    [[389, '400,00 %', '#666', 377], [400, '361,80 %', '#aaa', 388], [448, '200,00 %', '#a0b8f0', 435], [412, '323,60 %', '#0a800a', 400], [429, '261,80 %', '#70f070', 416], [441, '223,60 %', '#8c18c0', 429], [458, '161,80 %', '#ff8048', 446]]
        .forEach(f => fib(p, 1033, 1242, f[0], f[1], f[2], f[3]));
    fib(p, 1033, 1242, 477, '100,00 %', '#1818f0', 464, '2 2');
    p.line(X0, 415, X0 + XW, 415, '#f5a080', 1, '2 2');
    p.text(782, 412, '50,00 %', '#ff8048');
    p.line(X0, 520, X0 + XW, 520, '#3434dd', 1, '16 8');
    p.text(782, 518, '61,80 %', '#2a2ad0');
    p.line(327, 472, 768, 472, '#70f070', 1, '16 6');
    p.text(536, 469, '76,40 %', '#60e060');
    p.line(327, 492, 768, 492, '#90602a', 1, '4 3');
    p.text(536, 489, '88,20 %', '#8a5a24');
    p.text(271, 467, '76,40 %', '#70e070');
    p.line(264, 470, 304, 470, '#70f070', 1);
    p.text(271, 443, '61,80 %', '#4444dd');
    p.line(264, 446, 304, 446, '#3434dd', 1, '16 8');
    p.text(33, 491, '76,40 %', '#60e060');
    p.text(33, 500, '88,20 %', '#8a5a24');
    p.text(36, 509, '61,80 %', '#8080d8');
    p.poly([[23, 494], [60, 494]], '#60e060', 1);
    p.poly([[23, 498], [60, 503]], '#259025', 1);
    p.poly([[1023, 500], [1087, 500]], '#2a2ad0', 1);
    p.poly([[1023, 504], [1087, 504]], '#60e060', 1);
    p.line(1023, 507, 1087, 507, '#90602a', 1.5, '4 3');
    p.text(1041, 505, '88,20 %', '#8a5a24');
    p.line(1227, 446, 1296, 446, '#e8e020', 1, '4 3');
    p.text(1224, 441, '23,60 %', '#e0d820');
    p.line(1179, 457, 1296, 457, '#259025', 1, '4 3');
    p.text(1222, 463, '50,00 %', '#ff8048');

    // supports and resistances
    p.line(259, 343, X0 + XW, 343, '#2bb02b', 1.5);
    p.text(261, 340, '7.770,2', '#2ba02b');
    p.line(X0, 441, X0 + XW, 441, '#e8000c', 2);
    p.line(X0, 511, X0 + XW, 511, '#e8000c', 2);
    p.line(X0, 391, X0 + XW, 391, '#047d0c', 4);
    p.rect(24, 379, 54, 391, '#fff', '#0a800a');
    p.text(25, 388, '7.108,0', '#0a700a');
    p.text(25, 439, '6.437,4', '#e8000c');
    p.text(25, 509, '5.484,5', '#e8000c');
    p.line(1323, 340, 1387, 340, '#3434dd', 1, '16 8');
    p.text(1343, 337, '61,80 %', '#3a3ad8');
    p.line(1323, 405, 1387, 405, '#60e060', 1, '16 4');
    p.text(1343, 403, '76,40 %', '#60e060');

    // averages
    const fast = sample(FAST), slow = withTail(smooth(fast, 0.3), SLOW);
    p.between(fast, slow, 'rgba(150,215,150,.45)', 'rgba(240,120,150,.4)');
    p.coloured(BASE, { y: '#9c6a08', b: '#0a0a96', r: '#f01818' }, 3, '7 8');
    p.series(slow, '#b01020', 1.5, '5 4');
    drawCandles(p);
    p.coloured(FAST, { r: '#dd0a18', d: '#8a0d14', k: '#17601a', g: '#08dd08', h: '#0a920a' }, 3);
    p.poly([[206, 441], [216, 420], [225, 392], [230, 378], [240, 373], [256, 370]], '#c02030', 1);
    p.poly([[690, 470], [719, 488], [743, 495]], '#259025', 1);
    p.poly([[463, 453], [492, 459]], '#259025', 1);
    p.poly([[1105, 466], [1150, 466], [1167, 449]], '#a82030', 1);
    p.poly([[1174, 432], [1242, 427], [1290, 420]], '#a82030', 1);

    // projections
    p.line(1222, 453, 1284, 396, '#111', 2, '2 4');
    p.area([[1281, 393], [1289, 391], [1286, 400]], '#000');
    p.line(1334, 257, 1342, 322, '#111', 2, '2 4');
    p.area([[1337, 323], [1348, 322], [1343, 332]], '#000');
    p.line(1358, 330, 1394, 64, '#111', 2, '2 4');
    p.area([[1389, 63], [1400, 64], [1395, 54]], '#000');

    wave(p, 212, 349, 230, 364, '(iii)');
    wave(p, 240, 331, 258, 347, '(v)');
    wave(p, 262, 328, 275, 344, '1');
    wave(p, 236, 405, 255, 421, '(iv)');
    wave(p, 260, 443, 277, 458, '(a)');
    wave(p, 67, 497, 84, 513, '(ii)');
    wave(p, 430, 389, 446, 405, '(b)');
    wave(p, 981, 509, 998, 525, '(c)');
    wave(p, 999, 509, 1019, 525, '2 ?');
    wave(p, 1021, 468, 1036, 485, '(i)');
    wave(p, 1093, 495, 1109, 511, '(ii)');
    wave(p, 1160, 415, 1178, 431, '(iii)');
    wave(p, 1207, 454, 1228, 470, '(iv)');
    wave(p, 1324, 36, 1342, 52, '(1)');
    wave(p, 1319, 42, 1338, 58, '(v)');
    wave(p, 1330, 357, 1347, 373, '(2)');
    p.line(977, 533, 993, 533, '#6f9ff0', 2);
    p.text(25, 531, 'IT-Finance.com - Tiempo Real', '#222', 'start', 'wave');

    ['12.000', '11.500', '11.000', '10.500', '10.000', '', '9.000', '8.500', '8.000', '7.500', '7.000', '6.500', '6.000', '5.500']
        .forEach((s, i) => s && p.tick(rows[i], s, '#222'));
    p.tick(216, '9.492,7', '#128012', true);
    p.tick(247, '9.077,4', '#b81420', true);
    p.tick(350, '7.683,6', '#1414a0', true);
    p.done();
}

function drawTrains() {
    const p = Pen('trains');
    p.rect(X0, 542, 1377, 558, '#d9f5d6');
    p.rect(X0, 608, 1377, 623, '#fddad8');
    p.grid([574, 590]);
    p.line(X0, 542, 1377, 542, '#555', 1.5);
    p.line(X0, 623, 1377, 623, '#554040', 1.5);
    p.line(X0, 558, 1377, 558, '#111');
    p.line(X0, 607.5, 1377, 607.5, '#111');
    p.line(X0, 582, 1377, 582, '#0a0aa0', 1.5, '4 3');
    const train = sample(TRAIN), lag = smooth(train, 0.3);
    const wagon = sample(WAGON), late = smooth(wagon, 0.6);
    p.between(train, lag, 'rgba(120,120,220,.45)', 'rgba(235,130,225,.5)');
    p.between(train.map(y => Math.min(y, 558)), train.map(() => 558), 'rgba(40,140,40,.5)');
    p.between(train.map(() => 608), train.map(y => Math.max(y, 608)), 'rgba(150,60,40,.45)');
    p.between(wagon, late, 'rgba(110,210,110,.25)', 'rgba(240,100,100,.2)');
    p.series(late, '#333', 1, '3 2');
    p.slope(wagon, '#000', '#e01818', 1.5);
    p.series(lag, '#111', 2, '5 5');
    p.coloured(TRAIN, { r: '#f80808', n: '#0a0a9c' }, 3);
    nums(TRAIN_UP).forEach(m => p.arrow(m[0], m[1], true, '#0808b8', 4));
    nums(TRAIN_DOWN).forEach(m => p.arrow(m[0], m[1], false, '#b80808', 4));
    p.tick(553, '80', '#222', true);
    p.tick(559, '79,845', '#222', true);
    p.tick(542, '100', '#222', true);
    p.tick(590, '40', '#222');
    p.tick(570, '67,471', '#222', true);
    p.tick(582, '50', '#1414a0', true);
    p.tick(607, '20', '#222', true);
    p.tick(621, '0', '#222', true);
    p.done();
}

function drawWilly() {
    const p = Pen('willy');
    p.grid([647, 674, 687]);
    p.bands(WILLY_BANDS, 628, 704);
    p.line(X0, 634, 1377, 634, '#333', 1, '4 3');
    p.line(X0, 700.5, 1377, 700.5, '#333', 1, '4 3');
    p.line(X0, 667, 1377, 667, '#0a0a96', 1.5, '4 3');
    const w = sample(WILLY);
    p.between(w.map(y => Math.min(y, 650.5)), w.map(() => 650.5), 'rgba(50,160,70,.5)');
    p.between(w.map(() => 684), w.map(y => Math.max(y, 684)), 'rgba(130,10,20,.45)');
    p.line(X0, 650.5, 1377, 650.5, '#0a0a8c', 1.5);
    p.line(X0, 684, 1377, 684, '#d40a14', 1.5);
    p.coloured(WILLY, { o: '#ff9a08', d: '#960505', n: '#0808c8', g: '#0acb0a' }, 3);
    [121, 643, 769, 808, 860, 923, 944, 1020, 1045, 1064, 1078, 1334].forEach(x => p.arrow(x, 667, true, '#0808b0', 4.5));
    [259, 667, 787, 812, 884, 932, 957, 1029, 1048, 1067, 1324].forEach(x => p.arrow(x, 667, false, '#b00a0a', 4.5));
    p.tick(634, '0', '#222', true);
    p.tick(647, '-25', '#1414a0', true);
    p.tick(656, '-32,445', '#1414a0', true);
    p.tick(674, '-60', '#222');
    p.tick(667, '-50', '#1414a0', true);
    p.tick(684, '-75', '#d01420', true);
    p.tick(698, '-100', '#222', true);
    p.done();
}

function drawAwesome() {
    const p = Pen('awesome');
    p.grid([727, 749]);
    const a = sample(AWESOME), b = withTail(smooth(a, 0.28), AWESOME_SLOW);
    p.between(a, b, 'rgba(140,240,140,.25)', 'rgba(255,150,130,.25)');
    for (let i = 1; i < BARS; i++) {
        const x = FIRST + i * STEP, up = a[i] <= a[i - 1];
        if (i > 275) p.line(x, a[i], x, b[i], '#f0b0a8', 2);
        if (a[i] < 769) p.line(x, a[i], x, 770, up ? '#1010d8' : '#f000e8', 3);
        else if (a[i] > 771) p.line(x, 770, x, a[i], up ? '#108080' : '#e01018', 2);
    }
    p.line(X0, 770, 1377, 770, '#1414e8', 1.5);
    p.slope(a, '#050535', '#b006b0', 3);
    p.slope(b, '#66f966', '#ff8f08', 3);
    nums('47,777 140,768 154,769 187,766 211,764 250,752 434,767 575,770 603,770 632,769 676,769 719,774 832,769 855,769 889,769 967,769 1116,765 1184,763 1271,764 1334,730 1359,732').forEach(m => p.arrow(m[0], m[1], false, '#f6f200', 4));
    nums('52,777 144,769 182,768 202,765 216,764 333,770 487,775 594,770 618,770 647,770 705,773 754,778 851,770 884,769 908,773 1010,774 1165,763 1256,767 1296,762 1348,727').forEach(m => p.arrow(m[0], m[1], true, '#08e8f0', 4));
    p.tick(708, '3.000', '#222');
    p.tick(736, '1.851,4', '#f09010', true);
    p.tick(726, '1.851,4', '#d01420', true);
    p.tick(746, '974,04', '#a008a0', true);
    p.tick(754, '974,04', '#f000e8', true);
    p.tick(764, '-', '#1414a0', true);
    p.tick(768, '0', '#f000e8', true);
    p.tick(775, '0', '#f000e8', true);
    p.done();
}

function drawForce() {
    const p = Pen('force');
    p.grid([797, 814]);
    p.bands(FORCE_BANDS, 786, 832);
    const f = sample(FORCE);
    const blue = nums(FORCE_BANDS['#6b68c1'] + ' ' + FORCE_BANDS['#40ff40']);
    f.forEach((y, i) => {
        const x = FIRST + i * STEP;
        const on = blue.some(b => x >= b[0] && x <= b[1]);
        p.rect(x - 2.4, y, x + 2.4, 832, on ? 'rgba(25,25,195,.85)' : 'rgba(205,45,50,.85)', on ? '#1a1aa0' : '#a82830');
    });
    p.line(X0, 827.5, 1377, 827.5, '#501018');
    p.tick(795, '4', '#222');
    p.tick(814, '2', '#222');
    p.tick(802, '3,5326', '#e01818', true);
    p.tick(827, '0,5000', '#222', true);
    p.done();
}

function drawTime() {
    const p = Pen('time');
    TIMES.forEach(t => {
        p.line(t[1], 832, t[1], 834, '#6f8592');
        p.text(t[1], 842, t[0], '#222', 'middle');
    });
    p.done();
}

// sidebar tools, top to bottom
const knob = c => `<circle cx="3" cy="7" r="1.500" fill="none" stroke="${c}"/><path d="M4 7h9" stroke="${c}" stroke-width="1.500"/>`;
const oval = (c, f) => `<ellipse cx="7" cy="7" rx="5.500" ry="4" fill="${f}" stroke="${c}" stroke-width="1.500"/><path d="M11 3h4M13 1v4M-1 11h4M1 9v4" stroke="#22d"/>`;
const slant = c => `<path d="M0 14L14 0" stroke="${c}" stroke-width="1.500"/>`;
const flat = c => `<path d="M-1 7h16" stroke="${c}" stroke-width="2"/>`;
const TOOLS = [
    ['Puntero', '<path d="M4 1l7 7-4 .5 2 4-2 1-2-4-1 2z" fill="#eef2f4" stroke="#555" stroke-width=".7"/>'],
    ['Lupa', '<circle cx="6" cy="5" r="4" fill="#c4d8e2" stroke="#333"/><path d="M9 8l4 5" stroke="#222" stroke-width="2"/>'],
    ['Zoom de zona', '<path d="M0 4h6v8H0z" fill="none" stroke="#25d" stroke-dasharray="2 1"/><circle cx="8" cy="5" r="4" fill="#c4d8e2" stroke="#333"/><path d="M10 8l4 5" stroke="#222" stroke-width="2"/>'],
    ['Alerta', '<path d="M0 3h9" stroke="#22d"/><path d="M1 10c2-1 1-7 5-7s3 6 5 7v1H1z" fill="#fbe52a" stroke="#866"/><path d="M8 4l5 7-2 0 1 3M10 1l3 4" fill="#fff" stroke="#36c"/>'],
    ['Alarmas', '<path d="M2 10c2-1 1-8 5-8s3 7 5 8v1H2zM6 12h2" fill="#fbe52a" stroke="#866"/><path d="M1 2L0 5M13 2l1 3" stroke="#865"/>'],
    ['Ondas F', '<path d="M-1 9h2l2-7 3 7h3" fill="none" stroke="#222"/><path d="M4 9h5" stroke="#22d"/><path d="M11 13V7h4M11 10h3" fill="none" stroke="#22d" stroke-width="1.500"/>'],
    ['Nivel F', '<path d="M2 5h11" stroke="#e66" stroke-dasharray="2 1"/><path d="M2 8h7" stroke="#22d"/><path d="M11 13V7h4M11 10h3" fill="none" stroke="#22d" stroke-width="1.500"/>'],
    ['Zona', '<path d="M1 4h12v7H1z" fill="none" stroke="#6b9bf4"/><path d="M11 4h4M13 2v4M-1 11h4M1 9v4" stroke="#22d"/>'],
    ['Rectángulo', '<path d="M1 3h12v8H1z" fill="#b98c98" stroke="#e11" stroke-width="1.500"/><path d="M11 3h4M13 1v4M-1 11h4M1 9v4" stroke="#22d"/>'],
    ['Flecha', '<circle cx="2" cy="12" r="1.500" fill="none" stroke="#111"/><path d="M3 11l7-7" stroke="#000" stroke-width="2"/><path d="M6 1h7v7z"/>'],
    ['Texto', '<path d="M1 1h12v9l-3 3H1z" fill="none" stroke="#7aa5f0"/><path d="M4 4h6M7 4v7" stroke="#111" stroke-width="2"/>'],
    ['Nota', '<circle cx="7" cy="7" r="6" fill="#b9d3e8" stroke="#7aa5f0"/><path d="M4 4h6M7 4v7" stroke="#168a26" stroke-width="2"/>'],
    ['Segmento', '<circle cx="2" cy="12" r="1.500" fill="none" stroke="#333"/><circle cx="12" cy="3" r="1.500" fill="none" stroke="#333"/><path d="M3 11l8-7" stroke="#333"/>'],
    ['Semirrecta 1', knob('#6bf56b')], ['Semirrecta 2', knob('#2fb43a')], ['Semirrecta 3', knob('#0a6e14')], ['Semirrecta 4', knob('#f01010')],
    ['Regla', '<path d="M0 10L10 0l4 4L4 14z" fill="none" stroke="#666"/><path d="M3 8l2 2M5 6l1 1M7 4l2 2" stroke="#666"/>'],
    ['Canal', '<path d="M0 1h14v12H0z" fill="#8fc0a2"/><path d="M0 1h14M0 13h14" stroke="#d55" stroke-dasharray="2 1"/><path d="M1 11l4-6 3 4 3-5 3 3" fill="none" stroke="#cde"/>'],
    ['Elipse 1', oval('#e22', '#b8a5ad')], ['Elipse 2', oval('#86602c', '#a5adab')], ['Elipse 3', oval('#168a26', '#93b6b5')], ['Elipse 4', oval('#1fe01f', '#9cc9c0')],
    ['Línea 1', slant('#222')], ['Línea 2', slant('#2fa43a')], ['Línea 3', slant('#f01010')],
    ['Horizontal 1', flat('#444')], ['Horizontal 2', flat('#f58c78')], ['Horizontal 3', flat('#11e611')], ['Horizontal 4', flat('#0a6e14')], ['Horizontal 5', flat('#f01010')], ['Horizontal 6', flat('#5c93f5')], ['Horizontal 7', flat('#0a0aa8')],
    ['Vertical', '<path d="M7 0v14" stroke="#444" stroke-width="1.500"/>'],
    ['Ángulo', '<path d="M0 12h14M0 12l10-9" stroke="#e87060" fill="none"/><path d="M7 8a4 4 0 0 1 2 4" stroke="#22d" fill="none"/><circle cx="12" cy="5" r="2" fill="none" stroke="#22d"/>'],
    ['Círculo', '<circle cx="7" cy="7" r="6" fill="none" stroke="#f08050"/><path d="M4 7h5M7 4v5M10 2h4" stroke="#22d"/>'],
    ['Ondas 12345', '<path d="M0 3v4M3 5h3v3M0 11h4M7 3v5h3M6 11h3v3M10 2h4M12 0v4M11 9h4M13 7v4" stroke="#22d" fill="none"/>'],
    ['Ondas abc', '<path d="M1 2l9 9" stroke="#9ab" stroke-dasharray="2 2"/><path d="M0 10h4v3H1M9 3v3h3M9 12h4M6 7h3" stroke="#22d" fill="none" stroke-width="1.500"/>'],
    ['Aceptar', '<path d="M0 8l3-2 3 3 7-8 1 3-8 9z" fill="#3fc94a" stroke="#1f8a2c" stroke-width=".7"/>'],
    ['Me gusta', '<path d="M0 6h3v7H0zM4 7l3-6c3 0 2 3 1 5h6v3l-1 4H4z" fill="#3fc94a" stroke="#1f8a2c" stroke-width=".7"/>'],
    ['Borrar', '<path d="M2 1l5 3 5-3 2 3-4 3 4 4-3 3-4-4-4 4-3-3 4-4-4-3z" fill="#ee1c1c" stroke="#a00" stroke-width=".5"/>']
];
document.getElementById('tools').innerHTML = TOOLS.map((t, i) =>
    `<button class="tool${i ? '' : ' selected'}" aria-label="${t[0]}"><svg width="16" height="14" viewBox="-1 0 16 14">${t[1]}</svg></button>`).join('');

function draw() {
    drawPrice();
    drawTrains();
    drawWilly();
    drawAwesome();
    drawForce();
    drawTime();
}
draw();
window.addEventListener('resize', draw);
```
